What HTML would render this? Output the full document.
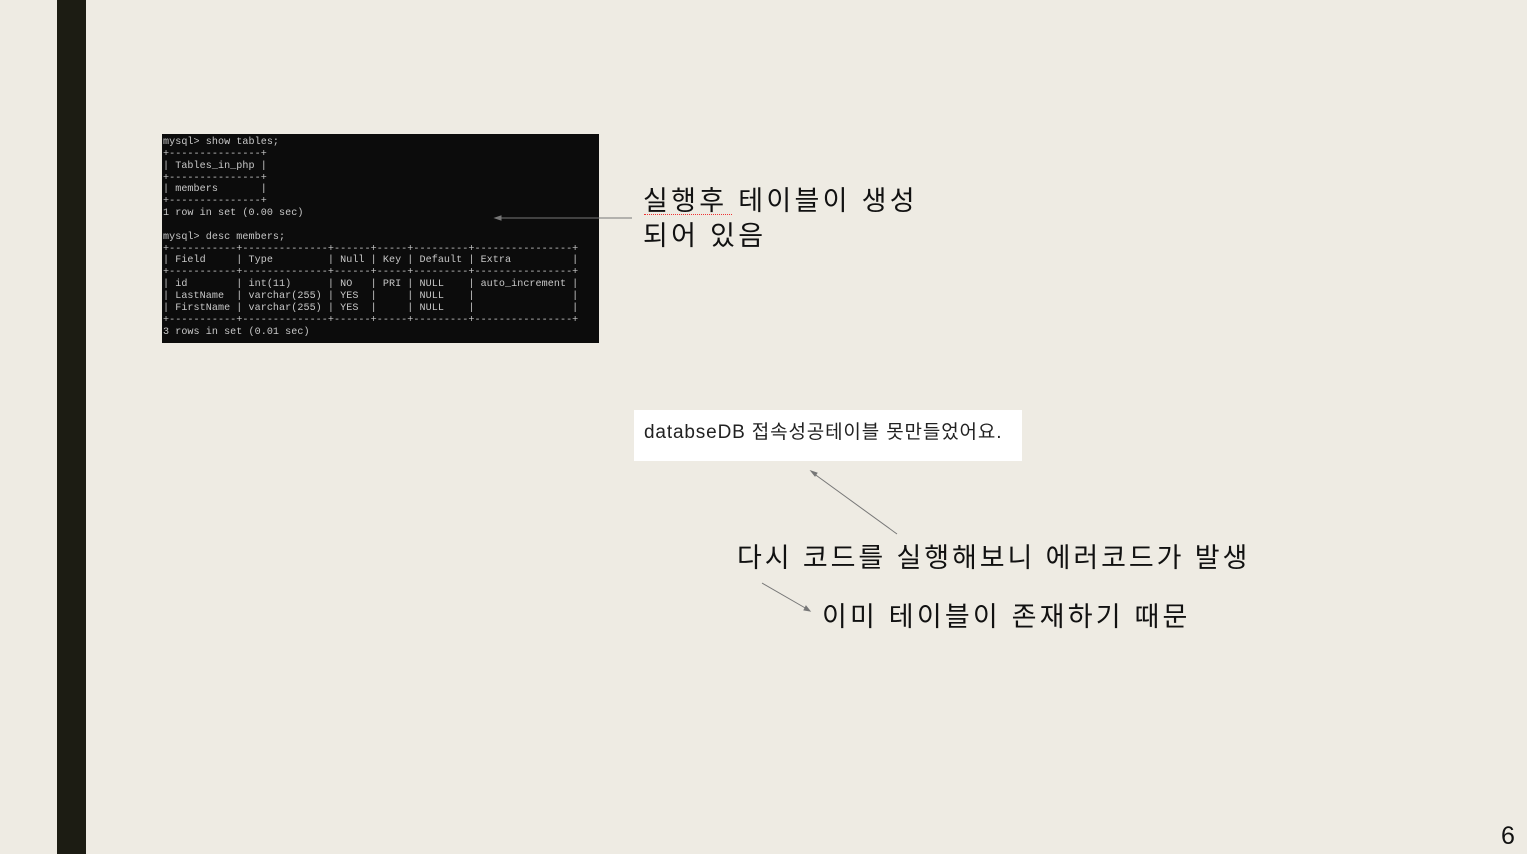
<!DOCTYPE html>
<html><head><meta charset="utf-8"><style>
body{margin:0;width:1527px;height:854px;background:#eeebe3;position:relative;overflow:hidden;font-family:"Liberation Sans","Noto Sans CJK KR",sans-serif;}
.bar{position:absolute;left:57px;top:0;width:29px;height:854px;background:#1c1c13;}
.term{position:absolute;left:162px;top:134px;width:437px;height:209px;background:#0c0c0c;}
.term pre{margin:0;position:absolute;left:1px;top:3px;color:#c8c8c8;font-family:"Liberation Mono",monospace;font-size:10.1px;line-height:11.85px;letter-spacing:0.05px;}
.t{position:absolute;color:#111;white-space:nowrap;}
</style></head><body>
<div class="bar"></div>
<div class="term"><pre>mysql&gt; show tables;
+---------------+
| Tables_in_php |
+---------------+
| members       |
+---------------+
1 row in set (0.00 sec)

mysql&gt; desc members;
+-----------+--------------+------+-----+---------+----------------+
| Field     | Type         | Null | Key | Default | Extra          |
+-----------+--------------+------+-----+---------+----------------+
| id        | int(11)      | NO   | PRI | NULL    | auto_increment |
| LastName  | varchar(255) | YES  |     | NULL    |                |
| FirstName | varchar(255) | YES  |     | NULL    |                |
+-----------+--------------+------+-----+---------+----------------+
3 rows in set (0.01 sec)</pre></div>
<div class="t" style="left:643px;top:184px;font-size:27px;line-height:35px;letter-spacing:3.3px;">실행후 테이블이 생성<br>되어 있음</div>
<div style="position:absolute;left:644px;top:214px;width:88px;border-top:1px dotted #e33;"></div>
<div style="position:absolute;left:634px;top:410px;width:388px;height:51px;background:#fff;"></div>
<div class="t" style="left:644px;top:421px;font-size:19px;line-height:24px;color:#222;letter-spacing:0.85px;">databseDB 접속성공테이블 못만들었어요.</div>
<div class="t" style="left:737px;top:540px;font-size:27px;line-height:36px;letter-spacing:2.9px;">다시 코드를 실행해보니 에러코드가 발생</div>
<div class="t" style="left:822px;top:599px;font-size:27px;line-height:36px;letter-spacing:3.2px;">이미 테이블이 존재하기 때문</div>
<div class="t" style="left:1501px;top:821px;font-size:25px;line-height:30px;">6</div>
<svg style="position:absolute;left:0;top:0" width="1527" height="854">
<g stroke="#777" stroke-width="1" fill="#777">
<line x1="632" y1="218" x2="498" y2="218"/><polygon points="495,218 501,216 501,220"/>
<line x1="897" y1="534" x2="813" y2="473"/><polygon points="811,471 817,473 815,476"/>
<line x1="762" y1="583" x2="807" y2="609"/><polygon points="810,611 804,610 806,606"/>
</g></svg>
</body></html>
